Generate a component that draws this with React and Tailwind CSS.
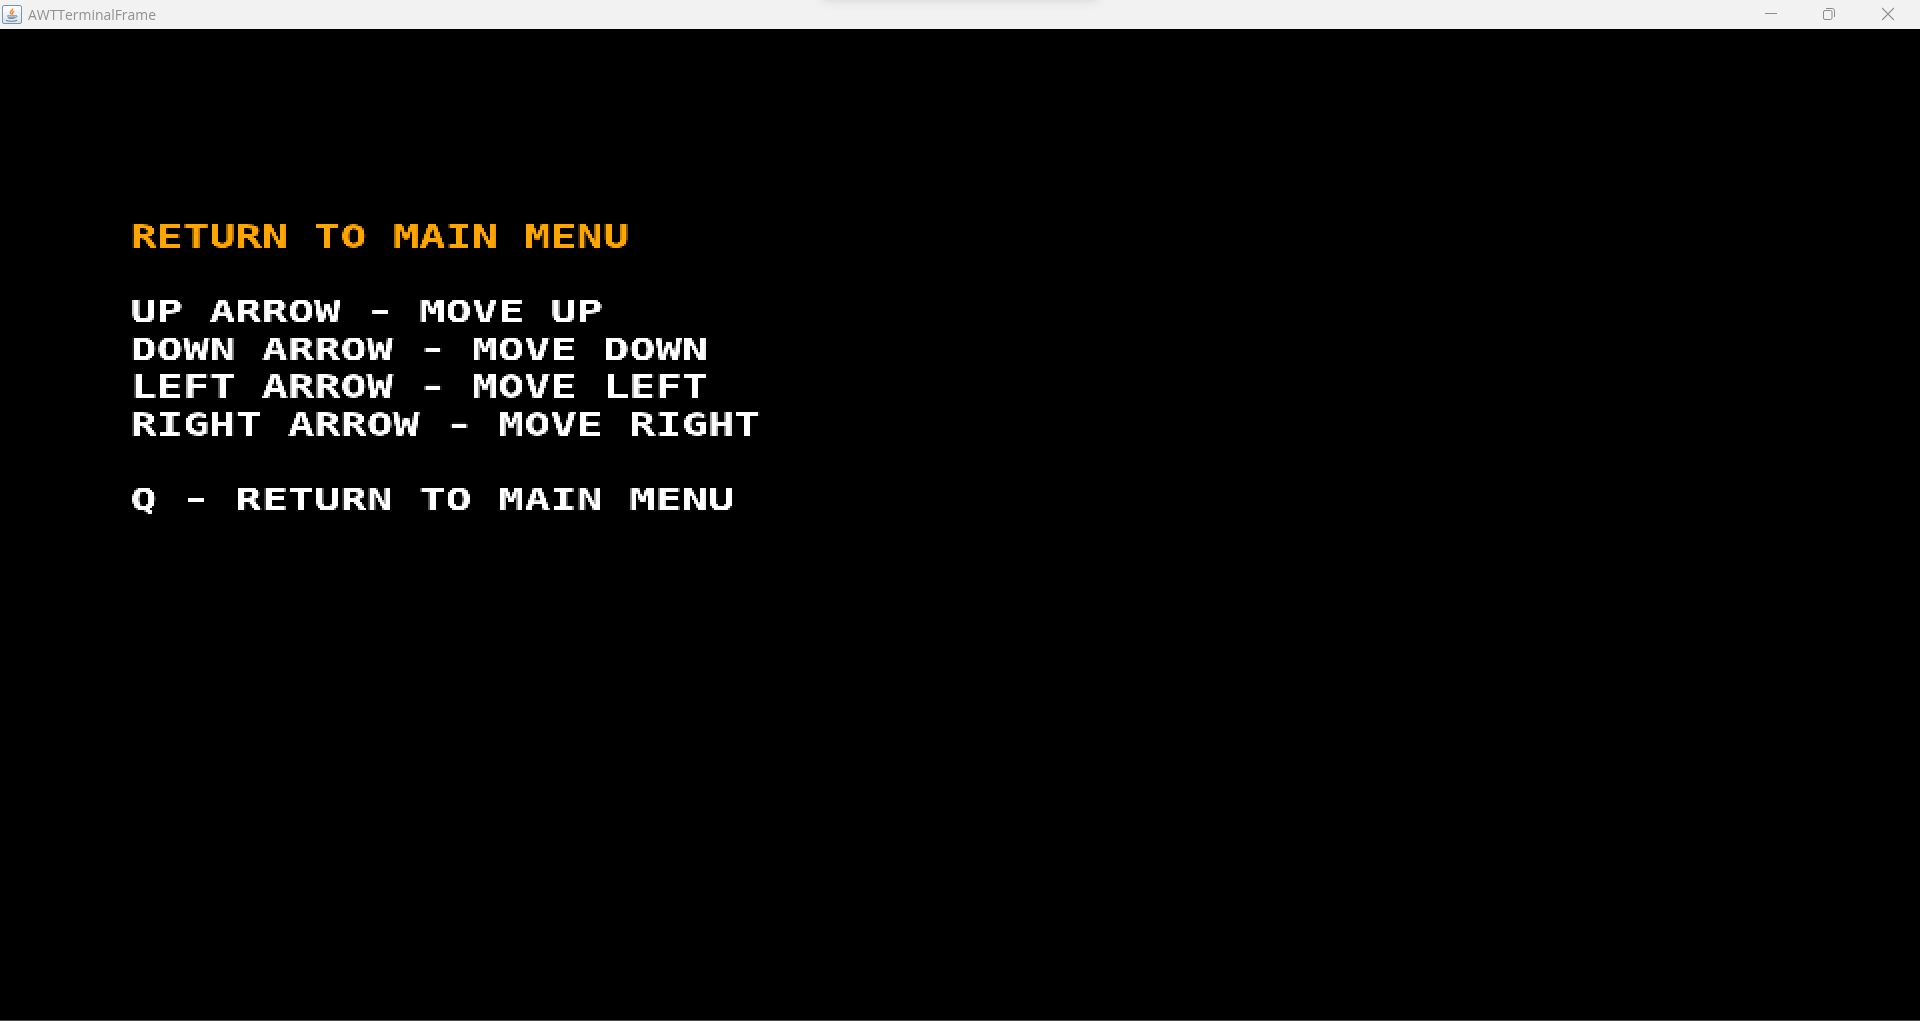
const LINES = [
  { text: 'RETURN TO MAIN MENU', selected: true },
  { text: '' },
  { text: 'UP ARROW - MOVE UP' },
  { text: 'DOWN ARROW - MOVE DOWN' },
  { text: 'LEFT ARROW - MOVE LEFT' },
  { text: 'RIGHT ARROW - MOVE RIGHT' },
  { text: '' },
  { text: 'Q - RETURN TO MAIN MENU' },
];

function JavaIcon() {
  return (
    <svg width="20" height="20" viewBox="0 0 20 20" fill="none">
      <defs>
        <linearGradient id="tile" x1="0" y1="0" x2="0" y2="1">
          <stop offset="0" stopColor="#ffffff" />
          <stop offset="1" stopColor="#dce3e9" />
        </linearGradient>
      </defs>
      <rect x="0.5" y="0.5" width="19" height="18" rx="1.5" fill="url(#tile)" stroke="#7795ae" />
      <path d="M10.5 3.5c.8 2.2-3.3 2.8-2 4.7l1 1.3M12.3 6.2c-2 .8-2.2 1.6-1.2 3.3" stroke="#ef8b35" strokeWidth="1.5" />
      <path d="M5.2 10.3h8.3c-.1 2-.8 3.2-2 3.8H7.2c-1.2-.6-1.9-1.8-2-3.8Z" fill="#7895ad" />
      <path d="M6 11.7h6.5" stroke="#dce5ec" strokeWidth=".7" />
      <path d="M13.5 10.5c2.3-.2 1.7 2-.8 2.4" stroke="#6485a1" />
      <path d="M4 15.2c2.5 1.4 8.6 1.4 11.2 0" stroke="#6485a1" strokeWidth="1.2" />
    </svg>
  );
}

// Samples every second pixel and doubles it, for the terminal's bitmap lettering.
function PixelFilter() {
  return (
    <svg width="0" height="0" className="absolute">
      <filter id="pixels" filterUnits="userSpaceOnUse" x="0" y="0" width="700" height="320" colorInterpolationFilters="sRGB">
        <feFlood x="0" y="0" width="1" height="1" floodColor="#fff" result="point" />
        <feOffset in="point" dx="0" dy="0" x="0" y="0" width="2" height="2" />
        <feTile result="grid" />
        <feComposite in="SourceGraphic" in2="grid" operator="in" result="a" />
        <feOffset in="a" dx="1" dy="0" result="b" />
        <feMerge result="row">
          <feMergeNode in="a" />
          <feMergeNode in="b" />
        </feMerge>
        <feOffset in="row" dx="0" dy="1" result="c" />
        <feMerge>
          <feMergeNode in="row" />
          <feMergeNode in="c" />
        </feMerge>
      </filter>
    </svg>
  );
}

function LineText({ text }) {
  return text.split('-').map((part, i) => (
    <span key={i}>
      {i > 0 && <span className="inline-block -translate-y-[1px] scale-x-[1.15] scale-y-[0.9]">-</span>}
      {part}
    </span>
  ));
}

function TitleBar() {
  return (
    <header className="relative flex h-[29px] shrink-0 items-center justify-between overflow-hidden bg-[#f2f2f2]">
      <div className="absolute -top-5 left-[822px] h-5 w-[276px] shadow-[0_0_12px_rgba(0,0,0,0.13)]" />
      <div className="flex items-center gap-[6px] pl-[2px]">
        <JavaIcon />
        <span className="origin-left scale-x-[0.928] font-['Open_Sans',sans-serif] text-[15px] leading-[29px] text-[#919191]">
          AWTTerminalFrame
        </span>
      </div>
      <div className="flex h-full pr-[2px] text-[#8c8c8c]">
        <span className="flex w-[58px] justify-center">
          <svg width="12" height="28" viewBox="0 0 12 28" stroke="currentColor">
            <path d="M0 13.5h12" />
          </svg>
        </span>
        <span className="flex w-[58px] justify-center">
          <svg width="12" height="28" viewBox="0 0 12 28" fill="none" stroke="currentColor">
            <rect x=".5" y="10.5" width="8.5" height="9" rx="1.5" />
            <path d="M3 8.5h6.2a2.3 2.3 0 0 1 2.3 2.3V17" />
          </svg>
        </span>
        <span className="flex w-[60px] justify-center">
          <svg width="12" height="28" viewBox="0 0 12 28" stroke="currentColor" strokeWidth="1.2">
            <path d="m0 8 12 12M12 8 0 20" />
          </svg>
        </span>
      </div>
    </header>
  );
}

export default function App() {
  return (
    <div className="flex h-[1021px] w-[1920px] flex-col overflow-hidden bg-black">
      <PixelFilter />
      <TitleBar />
      <main className="grow border-b border-[#4a4a4a] pt-[189px] pl-[130px]">
        <div className="w-[700px] [filter:url(#pixels)]">
          <div className="w-max origin-top-left scale-x-[1.384] font-['DejaVu_Sans_Mono',monospace] text-[31.5px] font-bold whitespace-pre text-white">
            {LINES.map((line, i) => (
              <p key={i} className={line.selected ? 'h-[37.6px] leading-[37.6px] text-[#ffa500]' : 'h-[37.6px] leading-[37.6px]'}>
                <LineText text={line.text} />
              </p>
            ))}
          </div>
        </div>
      </main>
    </div>
  );
}
